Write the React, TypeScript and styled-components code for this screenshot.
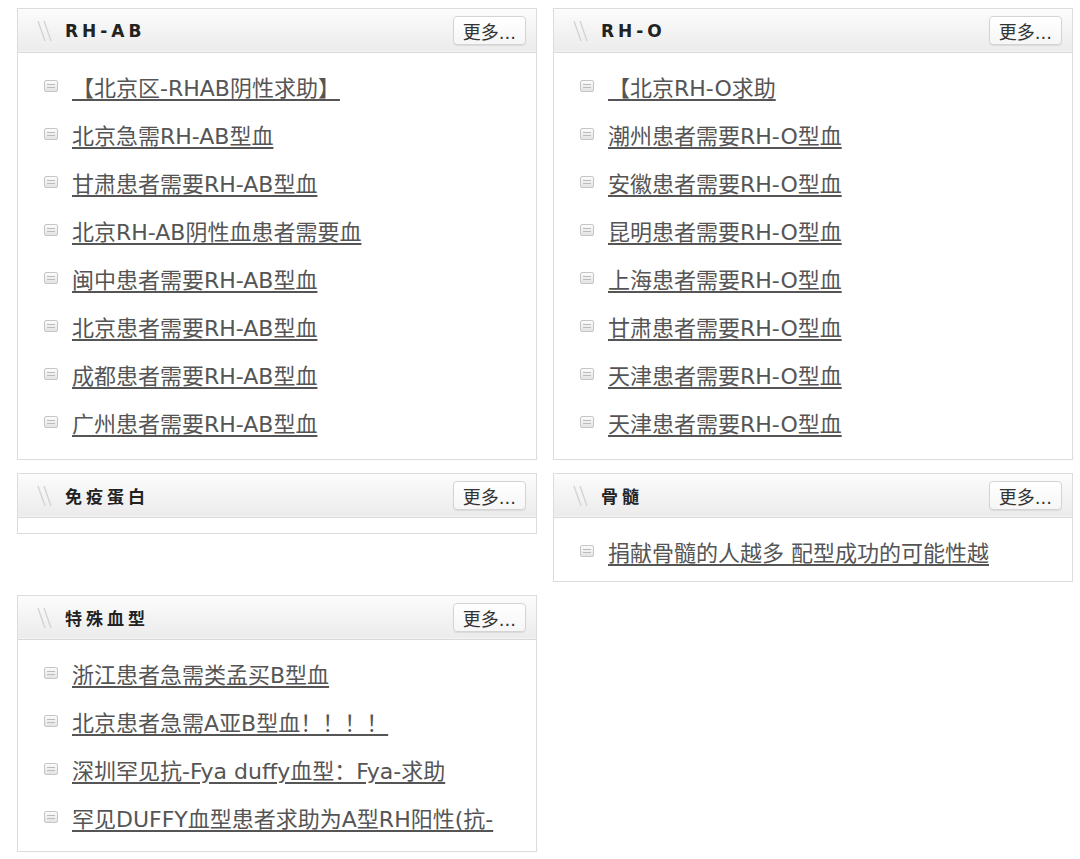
import * as React from 'react';
import styled, { createGlobalStyle } from 'styled-components';

const GlobalStyle = createGlobalStyle`
  html, body {
    margin: 0;
    padding: 0;
    background: #fff;
  }
  body {
    font-family: "DejaVu Sans", "Noto Sans CJK SC", sans-serif;
    color: #555;
  }
`;

const Page = styled.div`
  display: grid;
  grid-template-columns: 520px 520px;
  column-gap: 16px;
  row-gap: 13px;
  align-items: start;
  padding: 8px 0 0 17px;
`;

const Box = styled.section`
  border: 1px solid #dcdcdc;
  background: #fff;
`;

const Header = styled.div`
  height: 43px;
  display: flex;
  align-items: center;
  justify-content: space-between;
  padding: 0 10px 0 18px;
  background: linear-gradient(#fcfcfc, #ebebeb);
  border-bottom: 1px solid #d8d8d8;
  box-shadow: inset 0 -1px 0 #f4f4f4;
`;

const TitleWrap = styled.div`
  display: flex;
  align-items: center;
  gap: 11px;
`;

const Slashes = styled.svg`
  width: 18px;
  height: 24px;
  flex: none;
`;

const Title = styled.h3<{ $spacing: number }>`
  margin: 0;
  font-family: "DejaVu Sans", "Noto Sans CJK SC", sans-serif;
  font-size: 17px;
  font-weight: bold;
  letter-spacing: ${({ $spacing }) => $spacing}px;
  color: #222;
`;

const MoreButton = styled.a`
  display: inline-flex;
  align-items: center;
  justify-content: center;
  height: 27px;
  padding: 0 9px;
  border: 1px solid #d4d4d4;
  border-radius: 4px;
  background: linear-gradient(#ffffff, #f6f6f6);
  box-shadow: 0 1px 1px rgba(0, 0, 0, 0.08);
  font-family: "DejaVu Sans", "Noto Sans CJK SC", sans-serif;
  font-size: 18px;
  color: #333;
  text-decoration: none;
  cursor: pointer;
`;

const List = styled.ul<{ $empty?: boolean; $bottom: number }>`
  list-style: none;
  margin: 0;
  padding: ${({ $empty, $bottom }) => ($empty ? '0' : `9px 0 ${$bottom}px`)};
  height: ${({ $empty }) => ($empty ? '15px' : 'auto')};
`;

const Item = styled.li`
  height: 48px;
  display: flex;
  align-items: center;
  padding-left: 26px;
  gap: 14px;
`;

const Bullet = styled.span`
  width: 8px;
  height: 10px;
  flex: none;
  border: 1px solid #c6c6c6;
  border-radius: 2px;
  background: linear-gradient(#fbfbfb, #e4e4e4);
  display: flex;
  flex-direction: column;
  justify-content: center;
  gap: 2px;
  padding: 0 2px;
  box-sizing: content-box;

  &::before,
  &::after {
    content: '';
    display: block;
    height: 1px;
    background: #bbb;
  }
`;

const Link = styled.a`
  font-family: "DejaVu Sans", "Noto Sans CJK SC", sans-serif;
  font-size: 22px;
  color: #555;
  text-decoration: underline;
  text-underline-offset: 3px;
  white-space: nowrap;
  cursor: pointer;
`;

type PanelProps = { title: string; items: string[]; bottom?: number };

const Panel: React.FC<PanelProps> = ({ title, items, bottom = 12 }) => (
  <Box>
    <Header>
      <TitleWrap>
        <Slashes viewBox="0 0 18 24">
          <line x1="2" y1="2" x2="9" y2="22" stroke="#d2d2d2" strokeWidth="1.3" />
          <line x1="8" y1="2" x2="15" y2="22" stroke="#d2d2d2" strokeWidth="1.3" />
        </Slashes>
        <Title $spacing={4}>{title}</Title>
      </TitleWrap>
      <MoreButton>更多...</MoreButton>
    </Header>
    <List $empty={items.length === 0} $bottom={bottom}>
      {items.map((t, i) => (
        <Item key={i}>
          <Bullet />
          <Link>{t}</Link>
        </Item>
      ))}
    </List>
  </Box>
);

const rhab = [
  '【北京区-RHAB阴性求助】',
  '北京急需RH-AB型血',
  '甘肃患者需要RH-AB型血',
  '北京RH-AB阴性血患者需要血',
  '闽中患者需要RH-AB型血',
  '北京患者需要RH-AB型血',
  '成都患者需要RH-AB型血',
  '广州患者需要RH-AB型血',
];

const rho = [
  '【北京RH-O求助',
  '潮州患者需要RH-O型血',
  '安徽患者需要RH-O型血',
  '昆明患者需要RH-O型血',
  '上海患者需要RH-O型血',
  '甘肃患者需要RH-O型血',
  '天津患者需要RH-O型血',
  '天津患者需要RH-O型血',
];

const special = [
  '浙江患者急需类孟买B型血',
  '北京患者急需A亚B型血！！！！',
  '深圳罕见抗-Fya duffy血型：Fya-求助',
  '罕见DUFFY血型患者求助为A型RH阳性(抗-',
];

export default function App() {
  return (
    <>
      <GlobalStyle />
      <Page>
        <Panel title="RH-AB" items={rhab} bottom={13} />
        <Panel title="RH-O" items={rho} bottom={13} />
        <Panel title="免疫蛋白" items={[]} />
        <Panel title="骨髓" items={['捐献骨髓的人越多 配型成功的可能性越']} bottom={6} />
        <Panel title="特殊血型" items={special} bottom={10} />
      </Page>
    </>
  );
}
